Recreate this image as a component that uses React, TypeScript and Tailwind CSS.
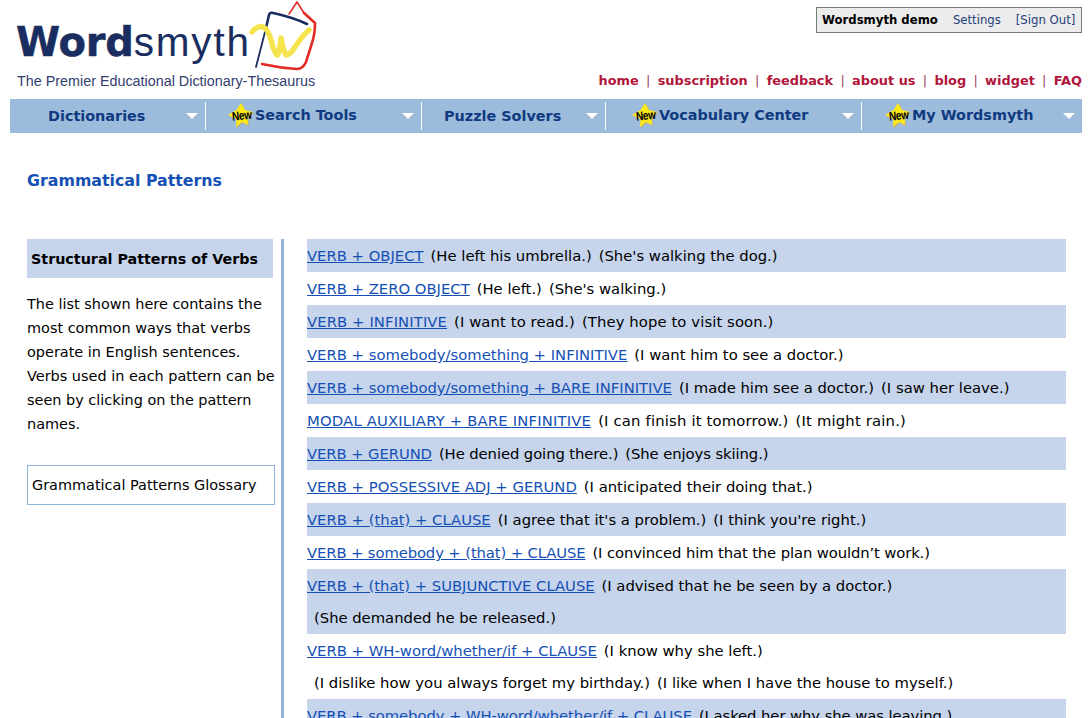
import React from "react";

const verdana = "font-['DejaVu_Sans',Verdana,sans-serif]";

const topLinks = ["home", "subscription", "feedback", "about us", "blog", "widget", "FAQ"];

const menus = [
  { label: "Dictionaries", isNew: false, width: "w-[196px]", text: "pl-[38px]" },
  { label: "Search Tools", isNew: true, width: "w-[216px]", text: "pl-[23px]" },
  { label: "Puzzle Solvers", isNew: false, width: "w-[184px]", text: "pl-[22px]" },
  { label: "Vocabulary Center", isNew: true, width: "w-[256px]", text: "pl-[27px]" },
  { label: "My Wordsmyth", isNew: true, width: "w-[220px]", text: "pl-[24px]" },
];

// fit = small letter spacing so each row ends where it does in the original font
const patterns: { link: string; lines: string[][]; shaded: boolean; fit?: string }[] = [
  { link: "VERB + OBJECT", lines: [["(He left his umbrella.)", "(She's walking the dog.)"]], shaded: true },
  { link: "VERB + ZERO OBJECT", lines: [["(He left.)", "(She's walking.)"]], shaded: false },
  { link: "VERB + INFINITIVE", lines: [["(I want to read.)", "(They hope to visit soon.)"]], shaded: true, fit: "tracking-[0.1px]" },
  { link: "VERB + somebody/something + INFINITIVE", lines: [["(I want him to see a doctor.)"]], shaded: false },
  { link: "VERB + somebody/something + BARE INFINITIVE", lines: [["(I made him see a doctor.)", "(I saw her leave.)"]], shaded: true },
  { link: "MODAL AUXILIARY + BARE INFINITIVE", lines: [["(I can finish it tomorrow.)", "(It might rain.)"]], shaded: false, fit: "tracking-[0.18px]" },
  { link: "VERB + GERUND", lines: [["(He denied going there.)", "(She enjoys skiing.)"]], shaded: true, fit: "tracking-[-0.09px]" },
  { link: "VERB + POSSESSIVE ADJ + GERUND", lines: [["(I anticipated their doing that.)"]], shaded: false },
  { link: "VERB + (that) + CLAUSE", lines: [["(I agree that it's a problem.)", "(I think you're right.)"]], shaded: true },
  { link: "VERB + somebody + (that) + CLAUSE", lines: [["(I convinced him that the plan wouldn\u2019t work.)"]], shaded: false, fit: "tracking-[-0.12px]" },
  { link: "VERB + (that) + SUBJUNCTIVE CLAUSE", lines: [["(I advised that he be seen by a doctor.)"], ["(She demanded he be released.)"]], shaded: true, fit: "tracking-[-0.02px]" },
  { link: "VERB + WH-word/whether/if + CLAUSE", lines: [["(I know why she left.)"], ["(I dislike how you always forget my birthday.)", "(I like when I have the house to myself.)"]], shaded: false },
  { link: "VERB + somebody + WH-word/whether/if + CLAUSE", lines: [["(I asked her why she was leaving.)"]], shaded: true, fit: "tracking-[-0.08px]" },
];

function LogoMark() {
  return (
    <svg width="72" height="76" viewBox="0 0 72 76" className="shrink-0" fill="none" strokeLinecap="round" strokeLinejoin="round">
      <path d="M8 67 L18 28" stroke="#1a2d60" strokeWidth="1.8" />
      <path d="M18 28 L21 15 Q22 12 25 13 Q44 17 59 24" stroke="#1a2d60" strokeWidth="2.6" />
      <path d="M41 14 L49 2 L56 13" stroke="#e32b26" strokeWidth="1.6" />
      <path d="M56 13 L67 23 Q67 34 64 43 L58 62 Q55 69 49 69 Q32 68 14 64" stroke="#e32b26" strokeWidth="2.6" />
      <path d="M4 32 Q10 25 15 27 Q20 29 23 40 Q26 52 29 55 Q31 56 33 38 Q35 50 38 55 Q42 55 47 47 Q54 36 61 30" stroke="#f5e44e" strokeWidth="5.4" />
    </svg>
  );
}

function NewStar() {
  return (
    <span className="relative inline-flex w-[26px] h-[26px] shrink-0 items-center justify-center">
      <svg width="27" height="26" viewBox="0 0 27 26" className="absolute top-0 -left-px">
        <path d="M14 1 L18 8 L26 10 L20.500 15 L21 23 L15 20 L9 25 L9.500 17 L1 13 L9.500 8 Z" fill="#d9a441" opacity="0.6" />
        <path d="M13 0 L17 7 L25 9 L19.500 14 L20 22 L14 19 L8 24 L8.500 16 L0 12 L8.500 7 Z" fill="#fbe91a" />
      </svg>
      <span className="relative font-['Liberation_Sans',sans-serif] text-[10px] font-bold text-black leading-none tracking-[-0.3px] -rotate-6 scale-y-125 mr-[1px]">New</span>
    </span>
  );
}

function Caret() {
  return <span className="w-0 h-0 border-x-[6px] border-x-transparent border-t-[6px] border-t-white" />;
}

export default function App() {
  return (
    <div className={`${verdana} w-[1092px] h-[718px] overflow-hidden bg-white text-black text-[14.8px]`}>
      {/* header */}
      <div className="flex justify-between h-[99px] pl-[17px] pr-[10px]">
        <div className="flex flex-col">
          <div className="flex items-end h-[72px]">
            <div className="w-[232px] -ml-[1px] flex items-baseline leading-none text-[#1a2d60] pb-[10px]">
              <span className="font-bold text-[40px] tracking-[-0.2px] [-webkit-text-stroke:0.5px_#1a2d60]">Word</span>
              <span className="font-['Liberation_Sans',sans-serif] text-[40.5px] tracking-[1.8px]">smyth</span>
            </div>
            <div className="mb-[-4px]">
              <LogoMark />
            </div>
          </div>
          <div className="font-['Liberation_Sans',sans-serif] text-[14.35px] leading-[18px] text-[#33406f]">
            The Premier Educational Dictionary-Thesaurus
          </div>
        </div>
        <div className="flex flex-col items-end pt-[7px]">
          <div className="flex items-center h-[26px] w-[266px] pl-[5px] pt-[2px] border border-[#6f7f74] bg-[#ececec] text-[11.7px] whitespace-nowrap">
            <span className="font-bold">Wordsmyth demo</span>
            <span className="ml-[15px] text-[#1c3d7a]">Settings</span>
            <span className="ml-[15px] text-[#1c3d7a]">[Sign Out]</span>
          </div>
          <div className="flex items-center gap-[7.3px] mt-[38px] text-[12.9px] font-bold text-[#b0163c] leading-[20px]">
            {topLinks.map((link, idx) => (
              <React.Fragment key={link}>
                {idx > 0 && <span className="font-normal text-[#a04060]">|</span>}
                <span>{link}</span>
              </React.Fragment>
            ))}
          </div>
        </div>
      </div>

      {/* menu bar */}
      <div className="flex ml-[10px] w-[1072px] h-[34px] bg-[#9dbcdc] py-[3px]">
        {menus.map((menu, idx) => (
          <div
            key={menu.label}
            className={`${menu.width} flex items-center justify-between pr-[7px] ${menu.text} ${idx < menus.length - 1 ? "border-r border-white" : ""}`}
          >
            <span className={`flex items-center font-bold text-[14.4px] text-[#0f3a80] ${menu.isNew ? "" : "pt-[2px]"}`}>
              {menu.isNew && <NewStar />}
              {menu.label}
            </span>
            <Caret />
          </div>
        ))}
      </div>

      <h1 className="ml-[27px] mt-[38px] text-[15.8px] leading-[20px] font-bold text-[#1450b4]">Grammatical Patterns</h1>

      {/* body */}
      <div className="flex mt-[48px] ml-[27px]">
        <div className="w-[248px] shrink-0">
          <div className="w-[246px] h-[39px] flex items-center pl-[4px] pt-[2px] bg-[#c6d4ec] font-bold text-[14.3px]">
            Structural Patterns of Verbs
          </div>
          <p className="mt-[14px] text-[14.45px] leading-[24px] whitespace-nowrap">
            The list shown here contains the<br />
            most common ways that verbs<br />
            operate in English sentences.<br />
            Verbs used in each pattern can be<br />
            seen by clicking on the pattern<br />
            names.
          </p>
          <div className="mt-[29px] h-[40px] flex items-center pl-[4px] pt-[1px] border border-[#8fb4dc] text-[14.45px]">
            Grammatical Patterns Glossary
          </div>
        </div>
        <div className="w-[3px] h-[480px] ml-[6px] shrink-0 bg-[#8fb4dc]" />
        <div className="w-[759px] ml-[23px]">
          {patterns.map((row) => (
            <div key={row.link} className={`${row.shaded ? "bg-[#c6d4ec]" : ""} ${row.fit ?? ""}`}>
              {row.lines.map((line, lineIdx) => (
                <div key={lineIdx} className={`whitespace-nowrap ${lineIdx > 0 ? "h-[32px] leading-[31px] pl-[7px]" : "h-[33px] leading-[34px]"}`}>
                  {lineIdx === 0 && <a className="text-[#1450b4] underline mr-[7px]">{row.link}</a>}
                  {line.map((part, partIdx) => (
                    <span key={partIdx} className={partIdx > 0 ? "ml-[7px]" : ""}>{part}</span>
                  ))}
                </div>
              ))}
            </div>
          ))}
        </div>
      </div>
    </div>
  );
}
